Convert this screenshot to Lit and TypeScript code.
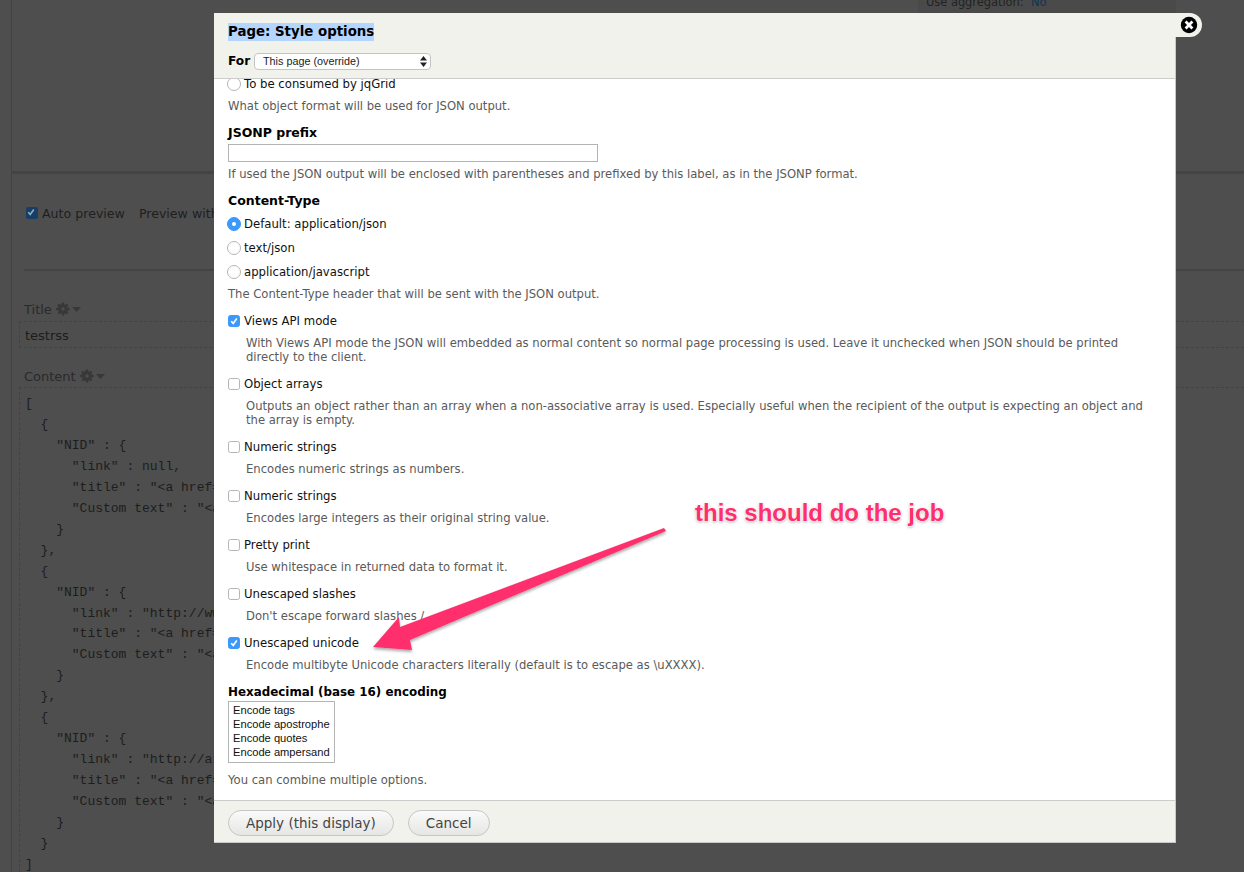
import { LitElement, html, css, svg } from "lit";
import { customElement } from "lit/decorators.js";

const code = `[
  {
    "NID" : {
      "link" : null,
      "title" : "<a href=
      "Custom text" : "<a
    }
  },
  {
    "NID" : {
      "link" : "http://www
      "title" : "<a href=
      "Custom text" : "<a
    }
  },
  {
    "NID" : {
      "link" : "http://ar
      "title" : "<a href=
      "Custom text" : "<a
    }
  }
]`;

const gear = svg`<svg class="gear" width="15" height="14" viewBox="0 0 16 14"><path fill="#383838" d="M6.4 0h2.2l.3 1.9 1.2.5 1.6-1.1 1.5 1.5-1.1 1.6.5 1.2 1.9.3v2.2l-1.9.3-.5 1.2 1.1 1.6-1.5 1.5-1.6-1.1-1.2.5-.3 1.9H6.4l-.3-1.9-1.2-.5-1.6 1.1-1.5-1.5 1.1-1.6-.5-1.2L0 8.1V5.9l1.9-.3.5-1.2L1.3 2.8l1.5-1.5 1.6 1.1 1.2-.5z"/><circle cx="7.5" cy="7" r="1.8" fill="#4e4e4e"/></svg><svg class="caret" width="9" height="5" viewBox="0 0 9 5"><path fill="#383838" d="M0 0h9L4.5 5z"/></svg>`;

@customElement("app-root")
export class AppRoot extends LitElement {
  static styles = css`
    :host { display: block; position: relative; width: 1244px; height: 872px; overflow: hidden; background: #4e4e4e; font-family: "DejaVu Sans", sans-serif; }
    * { box-sizing: border-box; }

    .page { height: 872px; margin-left: 11px; border-left: 1px solid #434343; display: flex; flex-direction: column; }
    .top { height: 161px; border-bottom: 3px solid #444444; flex: none; margin-top: 13px; }
    .preview { height: 97px; margin-left: 12px; border-bottom: 2px solid #444444; flex: none; display: flex; align-items: center; gap: 14px; padding: 0 0 17px 2px; font-size: 12.6px; color: #1f1f1f; }
    .auto { display: flex; align-items: center; gap: 4px; }
    .cb { width: 12px; height: 12px; border-radius: 2px; background: #173e66; display: flex; }
    .section-title { margin: 29px 0 0 12px; height: 18px; display: flex; align-items: center; gap: 1px; color: #2a2a2a; font-size: 13px; }
    .gear { margin-left: 3px; }
    .dashed { margin-left: 7px; border: 1px dashed #434343; border-right: none; padding-left: 5px; }
    .dashed.one { height: 27px; margin-top: 3px; font-size: 13px; line-height: 28px; color: #1c1c1c; }
    .section-title.second { margin-top: 19px; }
    .dashed.two { margin-top: 2px; border-bottom: none; flex: 1; min-height: 0; overflow: hidden; }
    pre { margin: 0; padding-top: 6px; font: 13px/20.95px "Liberation Mono", monospace; color: #1d1d1d; }

    .aggr { position: absolute; left: 918px; top: -9px; width: 258px; height: 22px; padding: 0 8px; font-size: 11.4px; line-height: 22px; color: #222; background: #4a4a4a; white-space: pre; }
    .aggr b { font-weight: 400; color: #0e3558; }

    .modal { position: absolute; left: 214px; top: 13px; width: 962px; height: 830px; display: flex; flex-direction: column; background: #fff; border-right: 1px solid #c8c8c8; border-bottom: 1px solid #c8c8c8; }
    .head { flex: none; height: 66px; background: #f2f2ed; border-bottom: 1px solid #cccccc; padding: 10px 14px 0; color: #000; }
    .head h1 { margin: 0; height: 18px; font: 700 13.35px/18px "DejaVu Sans", sans-serif; }
    .head h1 span { background: #b4d5fd; display: inline-block; }
    .for { margin-top: 11px; display: flex; align-items: center; font-weight: 700; font-size: 12.2px; height: 18px; }
    .for-l { width: 26px; }
    .select { width: 177px; height: 17px; background: #fff; border: 1px solid #c4c4c4; border-radius: 4px; font: 400 10.8px/15px "Liberation Sans", sans-serif; color: #222; padding: 0 3px 0 8px; display: flex; align-items: center; justify-content: space-between; }
    .body { flex: 1; min-height: 0; overflow: hidden; padding: 0 14px; font-size: 11.7px; color: #111; }
    .footer { flex: none; height: 42px; background: #f2f2ed; border-top: 1px solid #cccccc; padding: 9px 14px 0; display: flex; gap: 14px; align-items: flex-start; }
    .btn { height: 26px; border: 1px solid #c6c6c6; border-radius: 13px; background: linear-gradient(#fafafa, #e6e6e4); color: #444; font: 13.5px/24px "DejaVu Sans", sans-serif; padding: 0 17px; white-space: nowrap; }

    .row { height: 20px; display: flex; align-items: center; gap: 4px; line-height: 20px; white-space: nowrap; }
    .row.first { margin-top: -5px; }
    .row.radio + .row.radio { margin-top: 4px; }
    .desc { margin: 5px 0 -1px; line-height: 14px; color: #5a5a5a; font-size: 11.6px; white-space: nowrap; }
    .desc.sub { padding-left: 18px; }
    .item { margin-bottom: 11px; }
    .label { font-weight: 700; font-size: 12.5px; line-height: 14px; height: 14px; margin: 14px 0 -1px; color: #000; }
    .label.hex { font-size: 11.9px; }
    .input { width: 370px; height: 18px; border: 1px solid #b3b3b3; margin-top: 5px; background: #fff; }
    .tight { margin-top: 7px; }
    .list { margin-top: 3px; width: 107px; height: 62px; border: 1px solid #b5b5b5; padding: 1px 4px; font: 11.15px/14px "Liberation Sans", sans-serif; color: #111; }
    .mt9 { margin-top: 10px; }
    .radio-i { width: 14px; height: 14px; border-radius: 50%; border: 1px solid #b5b5b5; background: #fff; flex: none; margin: 0 -1px; display: flex; align-items: center; justify-content: center; }
    .radio-i.on { background: #3b99fc; border-color: #3b99fc; }
    .radio-i.on::after { content: ""; width: 4px; height: 4px; background: #fff; border-radius: 50%; }
    .box { width: 12px; height: 12px; flex: none; border: 1px solid #b5b5b5; border-radius: 2.5px; background: #fff; display: flex; }
    .box.on { background: #3b99fc; border-color: #3b99fc; }

    .close { position: absolute; left: 1175px; top: 13px; width: 27px; height: 24px; background: #f2f2ed; border-radius: 0 12px 12px 0; display: flex; align-items: center; }
    .callout { position: absolute; left: 695px; top: 499px; font: 700 24px/28px "Liberation Sans", sans-serif; color: #ff2e6c; white-space: nowrap; text-shadow: 0 0 2px #fff, 0 0 2px #fff, 0 0 3px #fff, 0 1px 3px #888; }
    .arrow { position: absolute; left: 360px; top: 500px; pointer-events: none; overflow: visible; }
  `;

  private check(color = "#fff") {
    return html`<svg width="10" height="10" viewBox="0 0 10 10"><path d="M2.2 5.2 4.2 7.4 7.8 2.4" fill="none" stroke=${color} stroke-width="1.7"/></svg>`;
  }

  private box(label: string, on = false, lines: string[] = []) {
    return html`<div class="item">
      <div class="row"><span class="box ${on ? "on" : ""}">${on ? this.check() : ""}</span>${label}</div>
      <div class="desc sub">${lines.map((l, i) => (i ? html`<br />${l}` : l))}</div>
    </div>`;
  }

  private radio(label: string, on = false, first = false) {
    return html`<div class="row radio ${first ? "first" : ""}"><span class="radio-i ${on ? "on" : ""}"></span>${label}</div>`;
  }

  render() {
    return html`
      <div class="page">
        <div class="top"></div>
        <div class="preview">
          <span class="auto"><span class="cb">${this.check("#8fa8c0")}</span>Auto preview</span><span>Preview with contextual filters:</span>
        </div>
        <div class="section-title">Title ${gear}</div>
        <div class="dashed one">testrss</div>
        <div class="section-title second">Content ${gear}</div>
        <div class="dashed two"><pre>${code}</pre></div>
      </div>
      <div class="aggr">Use aggregation:  <b>No</b></div>

      <div class="modal">
        <div class="head">
          <h1><span>Page: Style options</span></h1>
          <div class="for"><span class="for-l">For</span>
            <div class="select">This page (override)
              <svg width="7" height="11" viewBox="0 0 7 11"><path fill="#222" d="M3.5 0 7 4.4H0zM3.5 11 0 6.6h7z"/></svg>
            </div>
          </div>
        </div>
        <div class="body">
          ${this.radio("To be consumed by jqGrid", false, true)}
          <div class="desc">What object format will be used for JSON output.</div>
          <div class="label">JSONP prefix</div>
          <div class="input"></div>
          <div class="desc">If used the JSON output will be enclosed with parentheses and prefixed by this label, as in the JSONP format.</div>
          <div class="label">Content-Type</div>
          <div class="tight"></div>
          ${this.radio("Default: application/json", true)}
          ${this.radio("text/json")}
          ${this.radio("application/javascript")}
          <div class="item"><div class="desc">The Content-Type header that will be sent with the JSON output.</div></div>
          ${this.box("Views API mode", true, ["With Views API mode the JSON will embedded as normal content so normal page processing is used. Leave it unchecked when JSON should be printed", "directly to the client."])}
          ${this.box("Object arrays", false, ["Outputs an object rather than an array when a non-associative array is used. Especially useful when the recipient of the output is expecting an object and", "the array is empty."])}
          ${this.box("Numeric strings", false, ["Encodes numeric strings as numbers."])}
          ${this.box("Numeric strings", false, ["Encodes large integers as their original string value."])}
          ${this.box("Pretty print", false, ["Use whitespace in returned data to format it."])}
          ${this.box("Unescaped slashes", false, ["Don't escape forward slashes /."])}
          ${this.box("Unescaped unicode", true, ["Encode multibyte Unicode characters literally (default is to escape as \\uXXXX)."])}
          <div class="label hex">Hexadecimal (base 16) encoding</div>
          <div class="list">Encode tags<br />Encode apostrophe<br />Encode quotes<br />Encode ampersand</div>
          <div class="desc mt9">You can combine multiple options.</div>
        </div>
        <div class="footer">
          <div class="btn">Apply (this display)</div>
          <div class="btn">Cancel</div>
        </div>
      </div>

      <div class="close">
        <svg width="20" height="20" viewBox="0 0 20 20" style="margin-left:4px"><circle cx="10" cy="10" r="8.2" fill="#000"/><path d="M6.6 6.6 13.4 13.4M13.4 6.6 6.6 13.4" stroke="#fff" stroke-width="2.8"/></svg>
      </div>

      <svg class="arrow" width="320" height="170" viewBox="0 0 320 170">
        <defs><filter id="s" x="-10%" y="-10%" width="120%" height="130%"><feDropShadow dx="0" dy="2" stdDeviation="1.5" flood-color="#000" flood-opacity="0.35"/></filter></defs>
        <path filter="url(#s)" fill="#ff2e6c" d="M304 28 306 31 50 140 52 150 13 147 39 117 40 127z"/>
      </svg>
      <div class="callout">this should do the job</div>
    `;
  }
}
